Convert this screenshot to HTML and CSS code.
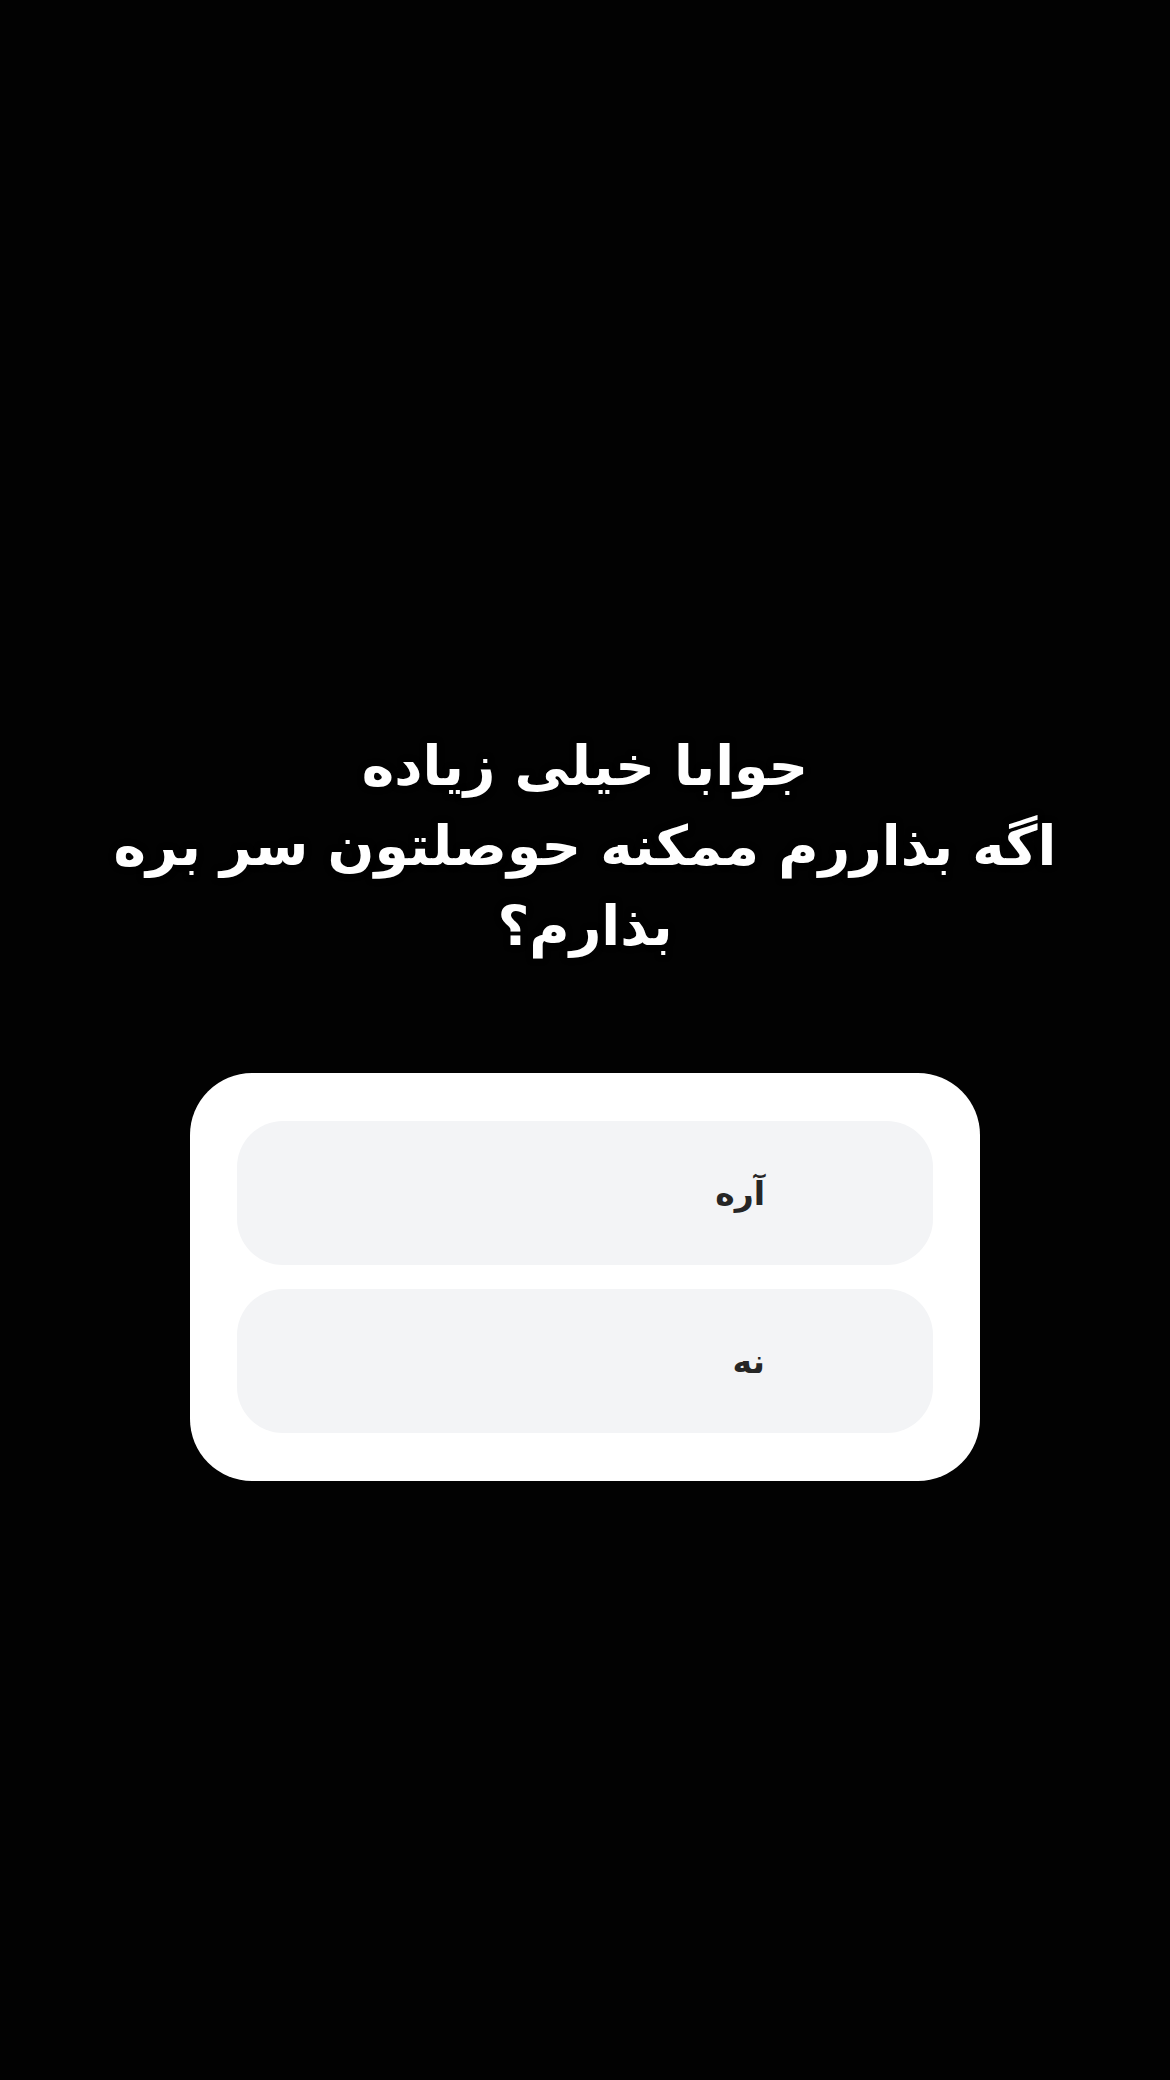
FILE: index.html
```html
<!DOCTYPE html>
<html lang="fa" dir="rtl">
<head>
    <meta charset="UTF-8">
    <meta name="viewport" content="width=device-width, initial-scale=1.0">
    <title>Story Poll</title>
    <link rel="stylesheet" href="styles.css">
</head>
<body>
    <div class="story">
        <h1 class="question">
            جوابا خیلی زیاده<br>
            اگه بذاررم ممکنه حوصلتون سر بره<br>
            بذارم؟
        </h1>
        <div class="poll">
            <div class="option"><span>آره</span></div>
            <div class="option"><span>نه</span></div>
        </div>
    </div>
</body>
</html>
```

FILE: styles.css
```css
html, body {
    margin: 0;
    padding: 0;
}
body {
    background-color: #020202;
    font-family: "DejaVu Sans", sans-serif;
    width: 1170px;
    height: 2080px;
    overflow: hidden;
}
.story {
    display: flex;
    flex-direction: column;
    align-items: center;
    padding-top: 726px;
}
.question {
    margin: 0;
    color: #fff;
    font-size: 55px;
    line-height: 80px;
    font-weight: bold;
    text-align: center;
    text-shadow: 0 0 6px rgba(0, 0, 0, 0.6);
}
.poll {
    margin-top: 107px;
    width: 790px;
    box-sizing: border-box;
    padding: 48px 47px;
    background: #fff;
    border-radius: 62px;
    display: flex;
    flex-direction: column;
    gap: 24px;
}
.option {
    height: 144px;
    background: #f3f4f6;
    border-radius: 46px;
    display: flex;
    align-items: center;
    padding-right: 168px;
    color: #262626;
    font-size: 33px;
    font-weight: bold;
}
```
